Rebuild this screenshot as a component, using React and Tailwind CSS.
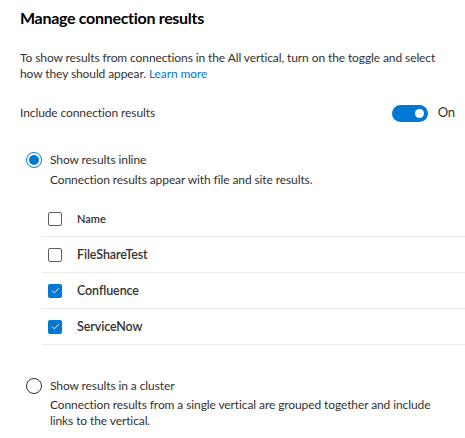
import React from 'react';

const rows = [
    { id: 1, name: 'FileShareTest', checked: false },
    { id: 2, name: 'Confluence', checked: true },
    { id: 3, name: 'ServiceNow', checked: true },
];

const Checkbox = ({ checked }) => (
    checked ? (
        <div className="w-[14px] h-[14px] rounded-[2px] bg-[#0078d4] flex items-center justify-center">
            <svg width="9" height="7" viewBox="0 0 9 7" fill="none">
                <path d="M1 3.6 L3.3 5.8 L8 1.2" stroke="#ffffff" strokeWidth="0.9" />
            </svg>
        </div>
    ) : (
        <div className="w-[14px] h-[14px] rounded-[2px] border border-[#605e5c] bg-white" />
    )
);

const Radio = ({ checked }) => (
    <div className={`w-4 h-4 rounded-full border flex items-center justify-center bg-white ${checked ? 'border-[#0078d4]' : 'border-[#323130]'}`}>
        {checked && <div className="w-[10px] h-[10px] rounded-full bg-[#0078d4]" />}
    </div>
);

export default function App() {
    return (
        <div className="w-[465px] h-[438px] bg-white text-[#323130] text-[12px] tracking-[-0.1px] overflow-hidden" style={{ fontFamily: 'Lato, "Noto Sans", sans-serif' }}>
            <div className="pl-5 pt-[4px]">
                <h2 className="text-[16px] leading-[28px] font-bold text-black tracking-[-0.3px]">Manage connection results</h2>

                <p className="mt-[18px] leading-[16px] pr-6">
                    To show results from connections in the All vertical, turn on the toggle and select how they should appear. <span className="text-[#0078d4]">Learn more</span>
                </p>

                <div className="mt-[21px] flex items-center justify-between pr-[10px] h-[20px]">
                    <span>Include connection results</span>
                    <div className="flex items-center gap-[10px]">
                        <div className="w-[36px] h-[17px] rounded-full bg-[#0078d4] flex items-center justify-end pr-[4px]">
                            <div className="w-[9px] h-[9px] rounded-full bg-white" />
                        </div>
                        <span className="text-[13px]">On</span>
                    </div>
                </div>

                <div className="mt-[27px] pl-[6px]">
                    <div className="flex items-center gap-[8px] h-[20px]">
                        <Radio checked />
                        <span>Show results inline</span>
                    </div>
                    <p className="pl-[24px] leading-[20px]">Connection results appear with file and site results.</p>
                </div>

                <div className="mt-[12px] ml-[22px]">
                    <div className="h-[35px] flex items-center border-b border-[#edebe9] pl-[6px]">
                        <Checkbox />
                        <span className="ml-[15px] text-[11px] font-semibold tracking-normal">Name</span>
                    </div>
                    {rows.map(row => (
                        <div key={row.id} className="h-[36px] flex items-center border-b border-[#edebe9] pl-[6px]">
                            <Checkbox checked={row.checked} />
                            <span className="ml-[15px] text-[12.5px] font-semibold pt-[2px]">{row.name}</span>
                        </div>
                    ))}
                </div>

                <div className="mt-[31px] pl-[6px]">
                    <div className="flex items-center gap-[8px] h-[20px]">
                        <Radio />
                        <span>Show results in a cluster</span>
                    </div>
                    <p className="pl-[24px] pr-8 leading-[16px] mt-[1px]">
                        Connection results from a single vertical are grouped together and include links to the vertical.
                    </p>
                </div>
            </div>
        </div>
    );
}
